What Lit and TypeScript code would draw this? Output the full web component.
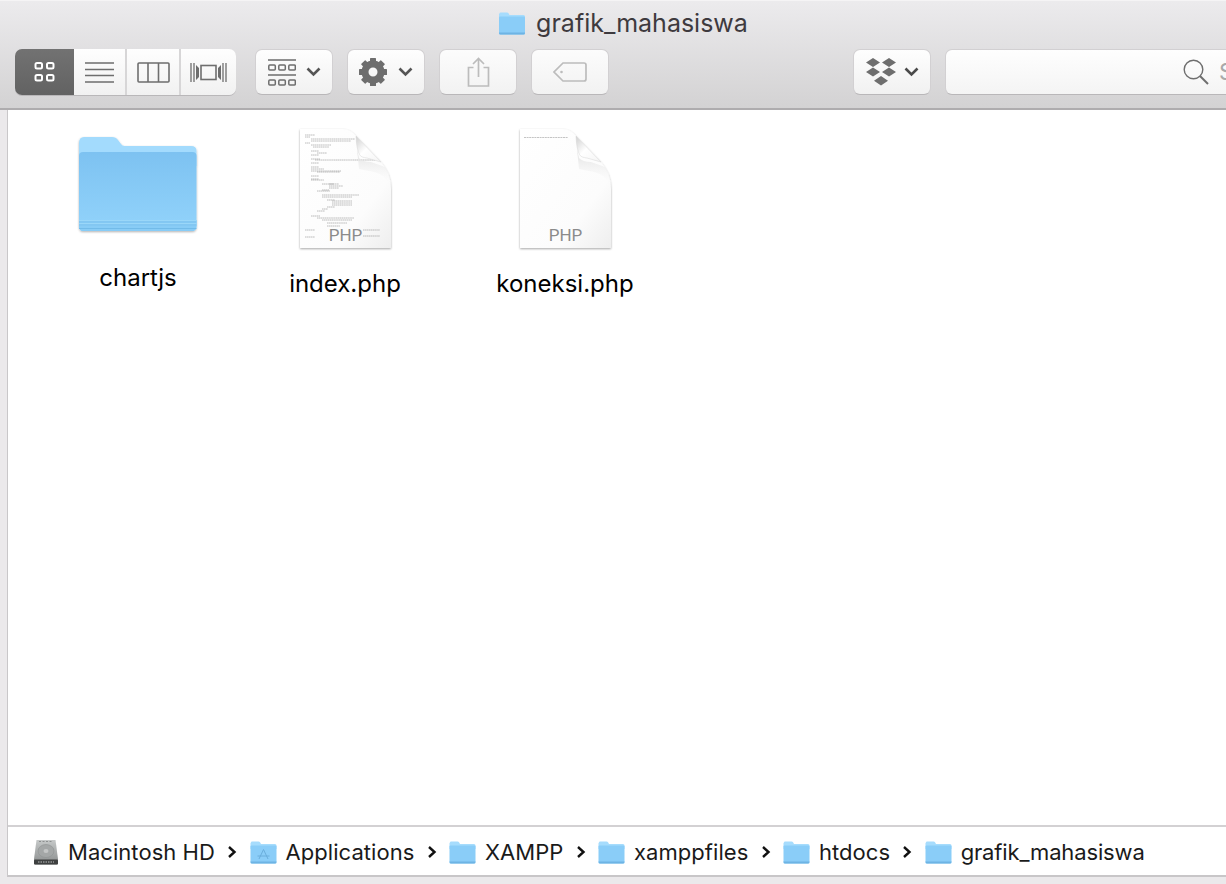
import { LitElement, css, html, svg } from 'lit'
import { customElement } from 'lit/decorators.js'

const chevron = (color = '#555') => html`<svg class="chev" width="15" height="10" viewBox="0 0 15 10">
  <path d="M1.5 1.5 7.5 7.5 13.5 1.5" fill="none" stroke=${color} stroke-width="2.6" />
</svg>`

const crumbArrow = html`<svg class="arrow" width="10" height="14" viewBox="0 0 10 14">
  <path d="M2 2 7.500 7 2 12" fill="none" stroke="#111" stroke-width="2.400" />
</svg>`

// small blue folder used in the title and the path bar
const smallFolder = (mark = false) => html`<svg class="sfolder" width="27" height="23" viewBox="0 0 27 23">
  <path d="M1 1.5Q1 .5 2 .5H8.5Q9.6 .5 10.2 1.6L11 3H25Q26.5 3 26.5 4.5V8H.5V2Z" fill="#a6dcfd" />
  <path d="M.5 5.5Q.5 4.5 1.5 4.5H25.5Q26.5 4.5 26.5 5.5V21Q26.5 22.5 25 22.5H2Q.5 22.5 .5 21Z" fill="#8acdf8" />
  <path d="M.5 21Q.5 22.5 2 22.5H25Q26.5 22.5 26.5 21V20.6H.5Z" fill="#6eb4e4" />
  ${mark
    ? svg`<path d="M9 18 13.5 8.5 18 18M7.5 15H19.5" fill="none" stroke="#6aaedc" stroke-width="1" />`
    : ''}
</svg>`

const hdIcon = html`<svg class="hd" width="26" height="26" viewBox="0 0 26 26">
  <defs>
    <linearGradient id="hdg" x1="0" y1="0" x2="0" y2="1">
      <stop offset="0" stop-color="#c6c9c9" /><stop offset="1" stop-color="#8a8d8d" />
    </linearGradient>
  </defs>
  <path d="M3.5 1H22.5L25 20V24Q25 25.5 23.500 25.500H2.500Q1 25.500 1 24V20Z" fill="url(#hdg)" />
  <path d="M6 2.500H20" stroke="#8d9090" stroke-width="1.200" stroke-dasharray="2 1.500" />
  <ellipse cx="13" cy="12" rx="8" ry="6.500" fill="#a4a7a7" stroke="#8f9292" stroke-width=".6" />
  <ellipse cx="13" cy="12" rx="2.500" ry="2" fill="#c4c6c6" />
  <rect x="1" y="20.500" width="24" height="5" rx="1" fill="#3e4040" />
  <path d="M5 23H21" stroke="#bdbfbf" stroke-width="1.200" stroke-dasharray="1.500 1" />
</svg>`

const gearIcon = (() => {
  let teeth = ''
  for (let i = 0; i < 8; i++) {
    teeth += `<rect x="11" y="0" width="6" height="7" rx=".6" transform="rotate(${i * 45} 14 14)" />`
  }
  return teeth
})()

// thumbnail source lines of index.php, read off the reference: [x, y, length]
const CODE_ROWS = [
  [10, 8, 10], [10, 10, 5], [16, 12, 44], [16, 14, 40], [10, 16, 5], [16, 18, 20], [18, 20, 16], [16, 24, 8],
  [22, 26, 10], [16, 28, 8], [16, 32, 9], [20, 33, 60], [16, 36, 8], [16, 40, 8], [16, 42, 13], [16, 44, 30],
  [22, 45, 23], [16, 49, 8], [16, 52, 8], [16, 53, 13], [27, 57, 12], [34, 57, 10], [34, 59, 14], [34, 61, 10],
  [27, 63, 7], [22, 64, 13], [27, 68, 37], [27, 70, 30], [32, 73, 8], [37, 74, 20], [37, 76, 20], [37, 78, 20],
  [32, 80, 8], [27, 82, 6], [22, 84, 8], [16, 89, 9], [22, 91, 37], [27, 93, 30], [32, 96, 20], [32, 99, 13],
  [10, 103, 10], [68, 103, 17], [10, 110, 10], [68, 109, 17],
]

@customElement('doc-icon')
class DocIcon extends LitElement {
  static properties = { lines: { type: String } }
  lines = 'few'

  render() {
    return html`<svg width="100" height="126" viewBox="0 0 100 126">
      <defs>
        <linearGradient id="shade" x1="0" y1="0" x2="1" y2="1">
          <stop offset="0" stop-color="#ffffff" /><stop offset=".7" stop-color="#fcfcfc" /><stop offset="1" stop-color="#eeeeee" />
        </linearGradient>
        <filter id="drop" x="-10%" y="-10%" width="120%" height="120%">
          <feDropShadow dx="0" dy="1" stdDeviation="1" flood-color="#000" flood-opacity=".35" />
        </filter>
        <linearGradient id="curl" x1="0" y1="0" x2="1" y2="1">
          <stop offset="0" stop-color="#cfcfcf" /><stop offset=".45" stop-color="#ffffff" /><stop offset="1" stop-color="#f4f4f4" />
        </linearGradient>
        <linearGradient id="under" x1="0" y1="0" x2="0" y2="1">
          <stop offset="0" stop-color="#dcdcdc" /><stop offset="1" stop-color="#ffffff" stop-opacity="0" />
        </linearGradient>
      </defs>
      <path d="M5 2H48Q55 2 61 9L85 34Q96 46 96 62V121H5Z" fill="url(#shade)" filter="url(#drop)" />
      ${this.lines === 'many'
        ? CODE_ROWS.map(([x, y, w]) => svg`<path d="M${x} ${y}h${w}" stroke="#8a8a8a" stroke-width=".55" stroke-dasharray="1.500 .4" />`)
        : svg`<path d="M9 10.500H53" stroke="#c4c4c4" stroke-width="1.200" stroke-dasharray="2 .6" />`}
      <path d="M62 22 64 31Q68 35 76 35L90 40Q96 48 96 62Q92 46 74 44L64 42Z" fill="url(#under)" />
      <path d="M61 9Q61.500 22 64.500 27.500Q66 30.500 72 31L86 35Z" fill="url(#curl)" stroke="#d4d4d4" stroke-width=".5" />
      <text x="50.500" y="114" text-anchor="middle" class="kind">PHP</text>
    </svg>`
  }

  static styles = css`
    :host {
      display: block;
      width: 100px;
      height: 126px;
    }
    .kind {
      font: 17px Roboto, sans-serif;
      fill: #8b8b8b;
    }
  `
}

@customElement('app-root')
export class AppRoot extends LitElement {
  render() {
    return html`
      <header class="toolbar">
        <div class="title">${smallFolder()}<span>grafik_mahasiswa</span></div>
        <div class="tools">
          <div class="segments">
            <button class="seg active" style="width:59px">
              <svg width="22" height="22" viewBox="0 0 22 22" fill="none" stroke="#fff" stroke-width="2">
                <rect x="1.500" y="2" width="6.500" height="5.500" rx="1.500" /><rect x="13" y="2" width="6.500" height="5.500" rx="1.500" />
                <rect x="1.500" y="14" width="6.500" height="5.500" rx="1.500" /><rect x="13" y="14" width="6.500" height="5.500" rx="1.500" />
              </svg>
            </button>
            <button class="seg" style="width:53px">
              <svg width="29" height="21" viewBox="0 0 29 21" stroke="#6e6e6e" stroke-width="1.300">
                <path d="M0 1H29M0 7.500H29M0 13.500H29M0 20H29" />
              </svg>
            </button>
            <button class="seg" style="width:54px">
              <svg width="33" height="21" viewBox="0 0 33 21" fill="none" stroke="#6e6e6e" stroke-width="1.600">
                <rect x="1" y="1" width="31" height="19" rx="1" /><path d="M11 1V20M21.500 1V20" />
              </svg>
            </button>
            <button class="seg last" style="width:55px">
              <svg width="37" height="21" viewBox="0 0 37 21" fill="none" stroke="#6e6e6e" stroke-width="1.300">
                <path d="M1 1V20M4 1V20M33 1V20M36 1V20" /><rect x="11" y="3.500" width="15" height="14" stroke-width="1.600" />
                <path d="M6 3V18L9 15V6ZM31 3V18L28 15V6Z" fill="#6e6e6e" stroke="none" />
              </svg>
            </button>
          </div>
          <button class="btn arrange">
            <svg width="28" height="27" viewBox="0 0 28 27" fill="none" stroke="#6e6e6e">
              <path d="M0 1H28M0 16H28" stroke-width="1.400" />
              <rect x=".8" y="6" width="6.500" height="5" rx="1" stroke-width="1.500" /><rect x="10.800" y="6" width="6.500" height="5" rx="1" stroke-width="1.500" /><rect x="20.800" y="6" width="6.500" height="5" rx="1" stroke-width="1.500" />
              <rect x=".8" y="21" width="6.500" height="5" rx="1" stroke-width="1.500" /><rect x="10.800" y="21" width="6.500" height="5" rx="1" stroke-width="1.500" /><rect x="20.800" y="21" width="6.500" height="5" rx="1" stroke-width="1.500" />
            </svg>
            ${chevron()}
          </button>
          <button class="btn gear">
            <svg width="28" height="28" viewBox="0 0 28 28">
              <g fill="#6e6e6e" .innerHTML=${gearIcon}></g>
              <circle cx="14" cy="14" r="8" fill="none" stroke="#6e6e6e" stroke-width="7" />
            </svg>
            ${chevron()}
          </button>
          <button class="btn plain">
            <svg width="23" height="30" viewBox="0 0 23 30" fill="none" stroke="#bcbcbc" stroke-width="1.700">
              <path d="M6.500 10.500H1.500V29H21.500V10.500H16.500M11.500 20V1.500M6 7 11.500 1.500 17 7" />
            </svg>
          </button>
          <button class="btn plain">
            <svg width="34" height="20" viewBox="0 0 34 20" fill="none" stroke="#bcbcbc" stroke-width="1.700">
              <path d="M10 1H31Q33 1 33 3V17Q33 19 31 19H10L1 10Z" />
              <circle cx="8.500" cy="10" r="1.300" fill="#bcbcbc" stroke="none" />
            </svg>
          </button>
          <button class="btn dropbox">
            <svg width="32" height="28" viewBox="0 0 32 28" fill="#6e6e6e">
              <path d="M8 0 15 4.500 8 9 1 4.500ZM24 0 31 4.500 24 9 17 4.500ZM8 9.500 15 14 8 18.500 1 14ZM24 9.500 31 14 24 18.500 17 14ZM16 18 23 22.800 16 27.500 9 22.800Z" />
            </svg>
            ${chevron('#4a4a4a')}
          </button>
          <div class="search">
            <svg width="26" height="26" viewBox="0 0 26 26" fill="none" stroke="#6e6e6e">
              <circle cx="10.500" cy="10.500" r="9.300" stroke-width="1.400" /><path d="M17 17 25 25" stroke-width="2" />
            </svg>
            <span>Search</span>
          </div>
        </div>
      </header>

      <div class="body">
        <main class="files">
          <div class="item folder">
            <svg width="122" height="98" viewBox="0 0 122 98">
              <defs>
                <linearGradient id="front" x1="0" y1="0" x2="0" y2="1">
                  <stop offset="0" stop-color="#7dc2f1" /><stop offset="1" stop-color="#92d3fb" />
                </linearGradient>
                <filter id="fshadow" x="-5%" y="-5%" width="110%" height="112%">
                  <feDropShadow dx="0" dy="1" stdDeviation=".8" flood-color="#000" flood-opacity=".3" />
                </filter>
              </defs>
              <g filter="url(#fshadow)">
                <path d="M2 7Q2 1 7 1H35Q39 1 41 4L44 8Q45 10 48 10H114Q119.500 10 119.500 15V30H2Z" fill="#a3dbfd" />
                <path d="M2 20Q2 16 6 16H115.500Q119.500 16 119.500 20V90Q119.500 95 115 95H6Q2 95 2 90Z" fill="url(#front)" />
              </g>
              <path d="M2 84H119.500V90Q119.500 95 115 95H6Q2 95 2 90Z" fill="#88ccf6" />
              <path d="M2 84.500H119.500M2 87.500H119.500" stroke="#9ad7f9" />
              <path d="M2 86H119.500M2 89H119.500" stroke="#7fc3ef" />
              <path d="M2 92.500H119.500" stroke="#72bbe9" />
            </svg>
            <span class="name">chartjs</span>
          </div>
          <div class="item doc"><doc-icon lines="many"></doc-icon><span class="name">index.php</span></div>
          <div class="item doc second"><doc-icon></doc-icon><span class="name">koneksi.php</span></div>
        </main>
        <footer class="path">
          <div class="crumb">${hdIcon}<span>Macintosh HD</span></div>
          ${crumbArrow}
          <div class="crumb">${smallFolder(true)}<span>Applications</span></div>
          ${crumbArrow}
          <div class="crumb">${smallFolder()}<span>XAMPP</span></div>
          ${crumbArrow}
          <div class="crumb">${smallFolder()}<span>xamppfiles</span></div>
          ${crumbArrow}
          <div class="crumb">${smallFolder()}<span>htdocs</span></div>
          ${crumbArrow}
          <div class="crumb current">${smallFolder()}<span>grafik_mahasiswa</span></div>
        </footer>
      </div>
      <div class="edge"></div>
    `
  }

  static styles = css`
    :host {
      display: flex;
      flex-direction: column;
      width: 1226px;
      height: 884px;
      overflow: hidden;
      background: #ebe9eb;
      font-family: Inter, 'Liberation Sans', sans-serif;
      color: #111;
    }

    .toolbar {
      flex: none;
      box-sizing: border-box;
      height: 110px;
      padding: 10px 0 0 15px;
      background: linear-gradient(#ecebed, #d3d2d3);
      border-top: 1px solid #f5f4f5;
      border-bottom: 2px solid #aeacae;
    }
    .title {
      display: flex;
      align-items: center;
      justify-content: center;
      gap: 9px;
      height: 24px;
      margin-left: 4px;
      font-size: 25px;
      color: #3e3a3e;
    }
    .title .sfolder {
      width: 30px;
      height: 23px;
    }
    .tools {
      display: flex;
      gap: 14px;
      margin-top: 14px;
      width: 1300px;
    }
    button {
      flex: none;
      display: flex;
      align-items: center;
      justify-content: center;
      padding: 0;
      margin: 0;
      height: 46px;
      border: 0;
      font: inherit;
      background: linear-gradient(#fefefe, #f1f1f1);
    }
    .segments {
      flex: none;
      display: flex;
      height: 46px;
      margin-right: 5px;
      border-radius: 7px;
      overflow: hidden;
      box-shadow: 0 1px 0 #b9b7b9;
    }
    .seg {
      box-sizing: border-box;
      border-right: 2px solid #d7d6d7;
    }
    .seg.last {
      border-right: 0;
    }
    .seg.active {
      background: linear-gradient(#727272, #626262);
      border-right: 0;
    }
    .btn {
      box-sizing: border-box;
      width: 78px;
      gap: 10px;
      border-radius: 7px;
      border: 1px solid #d2d0d2;
      border-bottom-color: #b9b7b9;
    }
    .gear {
      gap: 11px;
    }
    .plain {
      background: linear-gradient(#fcfcfc, #f2f2f2);
    }
    .dropbox {
      margin-left: 230px;
      gap: 7px;
    }
    .search {
      flex: none;
      box-sizing: border-box;
      display: flex;
      align-items: center;
      gap: 10px;
      width: 400px;
      height: 46px;
      padding-left: 237px;
      border-radius: 7px;
      border: 1px solid #d2d0d2;
      border-bottom-color: #b9b7b9;
      background: linear-gradient(#fefefe, #f4f4f4);
      color: #a9a9a9;
      font-size: 23px;
    }

    .body {
      flex: none;
      display: flex;
      flex-direction: column;
      box-sizing: border-box;
      height: 767px;
      margin-left: 7px;
      border-left: 1px solid #c9c7c9;
      border-bottom: 2px solid #c8c6c8;
      background: #fff;
    }
    .files {
      flex: 1;
      display: flex;
      align-items: flex-start;
      padding: 17px 0 0 30px;
    }
    .item {
      display: flex;
      flex-direction: column;
      align-items: center;
      width: 200px;
      font-size: 24px;
      color: #000;
    }
    .folder svg {
      margin: 9px 0 0;
    }
    .folder .name {
      margin-top: 29px;
    }
    .doc {
      margin-left: 7px;
    }
    .doc.second {
      margin-left: 20px;
    }
    .doc .name {
      margin-top: 16px;
    }
    .path {
      flex: none;
      display: flex;
      align-items: center;
      gap: 12.3px;
      box-sizing: border-box;
      height: 50px;
      padding: 2px 0 0 25px;
      border-top: 2px solid #d3d1d3;
      font-size: 22px;
      letter-spacing: 0.05px;
    }
    .crumb {
      display: flex;
      align-items: center;
      gap: 9px;
    }
    .crumb span {
      color: #1a1a1a;
    }
    .crumb.current span {
      letter-spacing: -0.15px;
    }
    .edge {
      flex: 1;
    }
  `
}

void DocIcon
